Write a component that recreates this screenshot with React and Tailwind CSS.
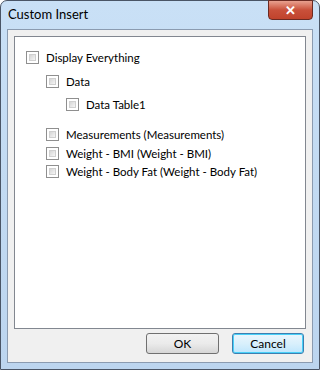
import { useState } from "react";

const items = [
  { label: "Display Everything", indent: 0, gap: 0 },
  { label: "Data", indent: 1, gap: 0 },
  { label: "Data Table1", indent: 2, gap: 0 },
  { label: "Measurements (Measurements)", indent: 1, gap: 1 },
  { label: "Weight - BMI (Weight - BMI)", indent: 1, gap: 0 },
  { label: "Weight - Body Fat (Weight - Body Fat)", indent: 1, gap: 0 },
];

function Check({ checked, onClick }) {
  return (
    <button
      onClick={onClick}
      className="w-[13px] h-[13px] border border-[#8f8f8f] bg-white p-[2px] flex-none"
    >
      <div className="w-full h-full border border-[#d0d0d0] bg-gradient-to-br from-[#d6d6d6] to-[#f6f6f6] flex items-center justify-center text-[9px] leading-none text-[#222]">
        {checked ? "✓" : ""}
      </div>
    </button>
  );
}

export default function App() {
  const [checked, setChecked] = useState({});

  return (
    <div
      className="w-[320px] h-[370px] bg-white"
      style={{ fontFamily: "Lato, 'Noto Sans', sans-serif" }}
    >
      <div className="relative w-full h-full rounded-t-[7px] border border-[#4a5566] bg-gradient-to-b from-[#c9e0f6] via-[#c2daf2] to-[#bcd5ef] flex flex-col">
        <div className="h-[28px] flex-none flex items-center pl-[7px] text-[13px] text-black">
          Custom Insert
        </div>
        <button className="absolute top-[-1px] right-[6px] w-[45px] h-[20px] rounded-b-[4px] border border-[#6b2a22] bg-gradient-to-b from-[#e8a08f] via-[#c9503a] to-[#c0432c] flex items-center justify-center text-white text-[13px] font-bold leading-none">
          ✕
        </button>
        <div className="flex-1 mx-[6px] mb-[6px] border border-[#8b9bb0] bg-[#f0f0f0] flex flex-col">
          <div className="h-[293px] mt-[6px] mx-[6px] border border-[#828790] bg-white pt-[9px] pl-[11px]">
            {items.map((it, i) => (
              <div
                key={i}
                className={`flex items-center ${i > 2 ? "h-[18.5px]" : "h-[23.5px]"} ${it.gap ? "mt-[9px]" : ""} ${
                  it.indent === 1 ? "pl-[20px]" : it.indent === 2 ? "pl-[40px]" : ""
                }`}
              >
                <Check
                  checked={!!checked[i]}
                  onClick={() => setChecked({ ...checked, [i]: !checked[i] })}
                />
                <span className="ml-[7px] text-[11.5px] text-black">{it.label}</span>
              </div>
            ))}
          </div>
          <div className="flex justify-end gap-[13px] mt-[4px] mr-[8px]">
            <button className="w-[73px] h-[21px] rounded-[3px] border border-[#707070] bg-gradient-to-b from-[#f2f2f2] via-[#ebebeb] to-[#d6d6d6] text-[12px] text-black">
              OK
            </button>
            <button className="w-[72px] h-[21px] rounded-[3px] border border-[#3c7fb1] bg-gradient-to-b from-[#eaf6fd] via-[#d9f0fc] to-[#bee6fd] text-[12px] text-black shadow-[inset_0_0_0_1px_#48d0f8]">
              Cancel
            </button>
          </div>
        </div>
      </div>
    </div>
  );
}
